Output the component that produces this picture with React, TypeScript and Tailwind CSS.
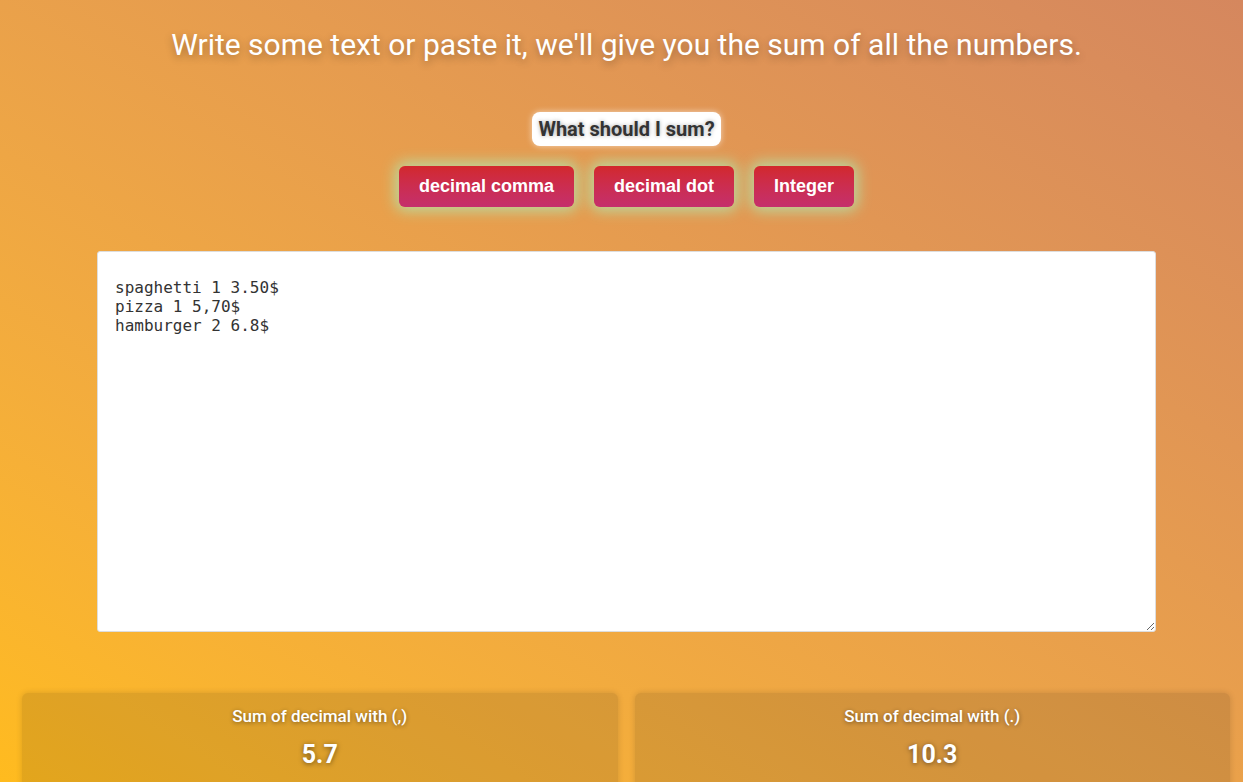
import { useState } from 'react';

const sample = `spaghetti 1 3.50$
pizza 1 5,70$
hamburger 2 6.8$`;

interface ModeButtonProps {
  label: string;
}

const ModeButton = ({ label }: ModeButtonProps) => {
  return (
    <button className="h-[41px] px-5 rounded-md bg-linear-to-b from-[#d2282b] to-[#c52f6c] text-white text-[18px] font-bold font-['Liberation_Sans',sans-serif] shadow-[0_0_14px_4px_rgba(175,230,175,0.8)]">
      {label}
    </button>
  );
};

interface SumCardProps {
  title: string;
  value: string;
}

const SumCard = ({ title, value }: SumCardProps) => {
  return (
    <div className="flex-1 h-[120px] rounded-md bg-black/[0.11] shadow-[0_0_6px_rgba(0,0,0,0.15)] flex flex-col items-center pt-[11px]">
      <p className="text-white text-[17px] font-medium [text-shadow:0_1px_4px_rgba(0,0,0,0.45)]">{title}</p>
      <p className="mt-[6px] text-white text-[25px] font-bold [text-shadow:0_1px_5px_rgba(0,0,0,0.5)]">{value}</p>
    </div>
  );
};

export default function App() {
  const [text, setText] = useState(sample);

  return (
    <div className="h-[782px] overflow-hidden bg-linear-to-tr from-[#ffbb1e] to-[#d5875e] font-['Roboto',sans-serif]">
      <div className="pl-[10px]">
        <h1 className="pt-[25px] text-center text-white text-[30px] leading-[40px] [text-shadow:0_3px_8px_rgba(0,0,0,0.3)]">
          Write some text or paste it, we'll give you the sum of all the numbers.
        </h1>

        <div className="mt-[47px] flex justify-center">
          <span className="h-[34px] px-[6px] flex items-center rounded-lg bg-white text-[20px] font-bold text-[#333] shadow-[0_0_6px_rgba(255,255,255,0.6)] [text-shadow:0_0_4px_rgba(0,0,0,0.35)]">
            What should I sum?
          </span>
        </div>

        <div className="mt-[20px] flex justify-center gap-5">
          <ModeButton label="decimal comma" />
          <ModeButton label="decimal dot" />
          <ModeButton label="Integer" />
        </div>
      </div>

      <div className="mt-[44px] pl-[97px] pr-[87px]">
        <textarea
          value={text}
          onChange={(e) => setText(e.target.value)}
          className="block w-full h-[381px] rounded-[3px] border border-[#ddd] bg-white px-[17px] pt-[26px] font-['DejaVu_Sans_Mono',monospace] text-[16px] leading-[19px] text-[#333] outline-none"
        />
      </div>

      <div className="mt-[61px] pl-[22px] pr-[13px] flex gap-[17px]">
        <SumCard title="Sum of decimal with (,)" value="5.7" />
        <SumCard title="Sum of decimal with (.)" value="10.3" />
      </div>
    </div>
  );
}
